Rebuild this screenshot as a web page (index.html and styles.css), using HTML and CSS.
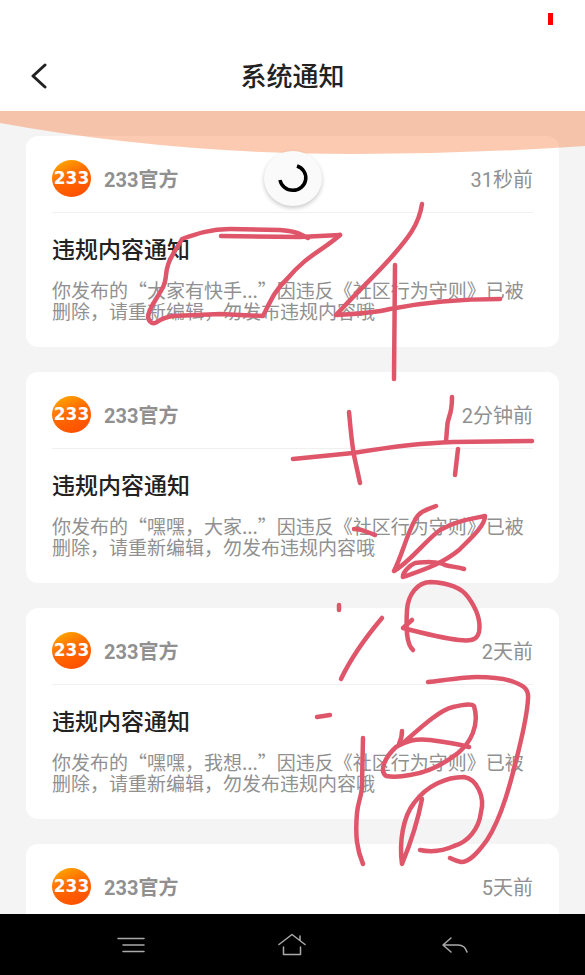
FILE: index.html
```html
<!DOCTYPE html>
<html lang="zh-CN">

<head>
    <meta charset="utf-8" />
    <meta name="viewport" content="width=device-width, initial-scale=1">
    <title>系统通知</title>
    <link rel="stylesheet" href="styles.css">
</head>

<body>
    <!-- 顶部标题栏 -->
    <header class="top">
        <div class="status"><i class="battery"></i></div>
        <div class="titleBar">
            <button class="back" type="button" aria-label="返回">
                <svg width="18" height="28" viewBox="0 0 18 28">
                    <path d="M15 2 L3 13 L15 24" />
                </svg>
            </button>
            <h1>系统通知</h1>
        </div>
    </header>

    <!-- 通知列表 -->
    <main class="list">
        <article class="card">
            <div class="info">
                <span class="avatar">233</span>
                <span class="name">233官方</span>
                <time>31秒前</time>
            </div>
            <h2>违规内容通知</h2>
            <p>你发布的“大家有快手...”因违反《社区行为守则》已被删除，请重新编辑，勿发布违规内容哦</p>
        </article>
        <article class="card">
            <div class="info">
                <span class="avatar">233</span>
                <span class="name">233官方</span>
                <time>2分钟前</time>
            </div>
            <h2>违规内容通知</h2>
            <p>你发布的“嘿嘿，大家...”因违反《社区行为守则》已被删除，请重新编辑，勿发布违规内容哦</p>
        </article>
        <article class="card">
            <div class="info">
                <span class="avatar">233</span>
                <span class="name">233官方</span>
                <time>2天前</time>
            </div>
            <h2>违规内容通知</h2>
            <p>你发布的“嘿嘿，我想...”因违反《社区行为守则》已被删除，请重新编辑，勿发布违规内容哦</p>
        </article>
        <article class="card">
            <div class="info">
                <span class="avatar">233</span>
                <span class="name">233官方</span>
                <time>5天前</time>
            </div>
        </article>

        <!-- 下拉时的弧形光晕 -->
        <svg class="glow" viewBox="0 0 585 44" preserveAspectRatio="none">
            <path d="M0 0 H585 V35 Q470 43 355 43 Q170 43 0 12 Z" />
        </svg>
        <div class="loading">
            <svg width="58" height="55" viewBox="0 0 58 55">
                <path d="M33 15 A13 12.5 0 1 1 16 29" />
            </svg>
        </div>
    </main>

    <!-- 系统导航栏 -->
    <nav class="navBar">
        <button type="button" aria-label="菜单">
            <svg width="28" height="24" viewBox="0 0 28 24">
                <path d="M1 5.5 H27 M6 12 H27 M6 18.5 H27" />
            </svg>
        </button>
        <button type="button" aria-label="主页">
            <svg width="28" height="24" viewBox="0 0 28 24">
                <path d="M1 11.5 L14 1.5 L27 11.5 M22 7.5 V3 M5.5 14 V21.5 H22.5 V14" />
            </svg>
        </button>
        <button type="button" aria-label="返回">
            <svg width="28" height="24" viewBox="0 0 28 24">
                <path d="M11 5 L3 12 L11 19 M3 12 H18 Q25 12 27 19" />
            </svg>
        </button>
    </nav>

    <!-- 手写涂鸦 -->
    <svg class="doodle" width="585" height="975" viewBox="0 0 585 975">
        <path d="M308 238 C298 233 294 231 280 230 L230 229 C210 229 196 234 182 239 C178 247 170 257 168 265 C165 273 167 280 163 287 C157 299 148 309 148 317 C149 322 153 325 157 322 C163 318 166 317 173 316 L220 314 L263 316 C271 300 275 290 287 279 C307 255 322 251 340 235" />
        <path d="M221 236 L300 237 L340 235" />
        <path d="M422 204 C419 225 407 239 395 253 C379 272 355 294 336 315 C356 314 374 313 390 309 C425 302 461 299 500 299" />
        <path d="M395 265 L394 379" />
        <path d="M349 412 C351 433 352 447 355 460 L360 483" />
        <path d="M293 459 L353 453 C390 447 420 443 453 442 L532 441" />
        <path d="M452 397 C452 419 447 415 447 429 L446 442" />
        <path d="M458 449 L455 475" />
        <path d="M354 529 C363 529 366 532 375 535" />
        <path d="M436 506 C425 510 419 512 415 520 C407 534 402 555 394 571 C410 562 425 541 440 530 C455 521 470 519 485 516 C485 526 470 539 459 550 C442 564 423 570 403 577 C402 573 410 565 415 563 C426 562 437 561 445 565 C453 567 458 567 464 569" />
        <path d="M413 650 C406 644 406 627 407 610 C408 595 417 582 431 582 C449 583 461 587 468 597 C476 608 481 621 479 632 C477 641 469 641 459 640 C441 638 422 633 403 628 L412 620" />
        <path d="M339 605 L339 610" />
        <path d="M382 618 C366 637 350 660 341 679" />
        <path d="M317 717 L330 715" />
        <path d="M428 682 C453 679 467 677 477 677 C491 677 506 679 514 682 C525 686 529 690 528 699 C527 718 521 740 517 757 C511 781 502 817 487 840 C477 854 469 862 461 862 Q456 861 450 858" />
        <path d="M363 738 L362 785 C362 796 358 801 357 813 C355 836 357 850 363 864" />
        <path d="M402 731 Q402 738 399 744" />
        <path d="M402 744 C418 730 439 710 453 707 C462 705 471 703 474 706 C480 726 470 743 458 753 C440 767 425 773 410 775 C400 777 392 777 386 776 C379 771 385 757 396 747 C407 741 415 738 430 740 C446 742 459 744 469 747" />
        <path d="M422 799 C418 820 411 842 402 864 C399 842 403 817 414 803 C427 785 447 777 464 777 C477 779 485 797 481 812 C479 829 468 842 454 846 C441 852 430 852 420 850" />
    </svg>
</body>

</html>
```

FILE: styles.css
```css
* {
    box-sizing: border-box;
    margin: 0;
    padding: 0;
}

body {
    position: relative;
    display: flex;
    flex-direction: column;
    height: 100vh;
    overflow: hidden;
    background-color: #f4f4f4;
    font-family: Roboto, "Noto Sans CJK SC", sans-serif;
}

button {
    border: 0;
    background: none;
}

svg {
    display: block;
    fill: none;
    stroke-linecap: round;
    stroke-linejoin: round;
}

/* 顶部 */
.top {
    background-color: #fff;
}

.status {
    display: flex;
    justify-content: flex-end;
    height: 40px;
    padding: 13px 32px 0 0;
}

.battery {
    width: 5px;
    height: 12px;
    background-color: #f00;
}

.titleBar {
    display: grid;
    grid-template-columns: 60px 1fr 60px;
    align-items: center;
    height: 71px;
    padding-top: 2px;
}

.back {
    padding-left: 30px;
}

.back svg {
    stroke: #222;
    stroke-width: 3;
}

.titleBar h1 {
    font-size: 26px;
    font-weight: 500;
    line-height: 36px;
    text-align: center;
    color: #222;
}

/* 列表 */
.list {
    position: relative;
    flex: 1;
    display: flex;
    flex-direction: column;
    gap: 25px;
    min-height: 0;
    padding: 25px 26px 0;
    overflow: hidden;
}

.card {
    flex: none;
    padding: 0 26px 26px;
    border-radius: 12px;
    background-color: #fff;
}

.card .info {
    display: flex;
    align-items: center;
    height: 77px;
    padding-top: 8px;
    border-bottom: 1px solid #f0f0f0;
    font-size: 20px;
    line-height: 24px;
    color: #909090;
}

.avatar {
    width: 39px;
    height: 37px;
    margin-right: 13px;
    border-radius: 50%;
    background: linear-gradient(155deg, #ffb400 0%, #ff6a00 45%, #ff4800 100%);
    font-family: "DejaVu Sans", sans-serif;
    font-size: 17px;
    font-weight: 700;
    line-height: 37px;
    text-align: center;
    color: #fff;
}

.name {
    padding-top: 4px;
    font-weight: 700;
}

.card time {
    margin-left: auto;
    padding-top: 4px;
}

.card h2 {
    margin: 22px 0 13px;
    font-size: 23px;
    font-weight: 500;
    line-height: 31px;
    color: #222;
}

.card p {
    font-family: "Noto Sans CJK SC", sans-serif;
    font-size: 19px;
    line-height: 21px;
    color: #909090;
}

.glow {
    position: absolute;
    top: 0;
    left: 0;
    width: 100%;
    height: 44px;
    fill: rgba(247, 122, 60, 0.4);
}

.loading {
    position: absolute;
    top: 40px;
    left: 50%;
    margin-left: -29px;
    border-radius: 50%;
    background-color: #fafafa;
    box-shadow: 0 2px 4px rgba(0, 0, 0, 0.22);
}

.loading svg {
    stroke: #000;
    stroke-width: 3.5;
    stroke-linecap: butt;
}

/* 底部导航 */
.navBar {
    display: grid;
    grid-template-columns: repeat(3, 1fr);
    height: 61px;
    padding: 0 50px;
    background-color: #000;
}

.navBar button {
    display: flex;
    align-items: center;
    justify-content: center;
}

.navBar svg {
    stroke: #aaa;
    stroke-width: 1.5;
}

.doodle {
    position: absolute;
    top: 0;
    left: 0;
    stroke: #df566b;
    stroke-width: 4.5;
    pointer-events: none;
}
```
